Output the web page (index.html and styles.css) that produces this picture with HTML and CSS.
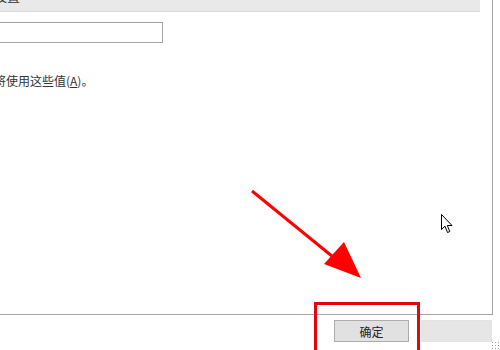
FILE: index.html
```html
<!DOCTYPE html>
<html lang="zh-CN">
<head>
  <meta charset="UTF-8" />
  <title>设置</title>
  <link rel="stylesheet" href="styles.css">
</head>
<body>
  <div class="screen">
    <div class="panel">
      <div class="header"><span class="header-title">设置</span></div>
      <div class="field"><div class="input"></div></div>
      <p class="note">将使用这些值(<u>A</u>)。</p>
    </div>
    <div class="footer">
      <button class="btn">确定</button>
      <div class="btn btn-blank"></div>
    </div>

    <!-- annotation overlays -->
    <svg class="arrow" width="120" height="100" viewBox="0 0 120 100">
      <line x1="2" y1="10" x2="88" y2="80" stroke="#f00" stroke-width="3" />
      <polygon points="111,97 74,83 94,61" fill="#f00" />
    </svg>
    <div class="mark"></div>
    <svg class="cursor" width="13" height="20" viewBox="0 0 13 20">
      <path d="M0.5 0.5 L0.5 15.5 L4 12.2 L6.5 18.5 L8.8 17.5 L6.3 11.5 L11 11.5 Z" fill="#fff" stroke="#000" stroke-width="1" stroke-linejoin="miter" />
    </svg>
    <div class="grip"></div>
  </div>
</body>
</html>
```

FILE: styles.css
```css
* {
  margin: 0;
  padding: 0;
  box-sizing: border-box;
}

body {
  width: 500px;
  height: 350px;
  overflow: hidden;
  background: #fff;
  font-family: "Noto Sans CJK SC", "Liberation Sans", sans-serif;
  color: #222;
}

.screen {
  position: relative;
  width: 500px;
  height: 350px;
  overflow: hidden;
}

.panel {
  width: 493px;
  height: 315px;
  border-right: 1px solid #a3a3a3;
  border-bottom: 1px solid #a3a3a3;
  overflow: hidden;
}

.header {
  width: 480px;
  height: 12px;
  background: #e9e9e9;
  border-bottom: 1px solid #dadada;
  overflow: hidden;
}

.header-title {
  display: block;
  margin-top: -12px;
  margin-left: -6px;
  font-size: 13px;
  line-height: 16px;
  color: #333;
}

.field {
  padding-top: 10px;
}

.input {
  width: 164px;
  height: 21px;
  margin-left: -1px;
  border: 1px solid #a3a3a3;
  background: #fff;
}

.note {
  margin-top: 29px;
  margin-left: -6px;
  font-size: 12px;
  line-height: 18px;
  color: #333;
}

.note u {
  text-decoration: underline;
  text-underline-offset: 1px;
}

.footer {
  display: flex;
  gap: 12px;
  padding: 5px 0 0 334px;
}

.btn {
  width: 75px;
  height: 22px;
  border: 1px solid #adadad;
  background: #e1e1e1;
  font-family: "Noto Sans CJK SC", sans-serif;
  font-size: 12px;
  color: #222;
}

.btn-blank {
  width: 71px;
  border-color: #e3e3e3;
  background: #e6e6e6;
}

.arrow {
  position: absolute;
  left: 250px;
  top: 181px;
}

.mark {
  position: absolute;
  left: 314px;
  top: 302px;
  width: 106px;
  height: 52px;
  border: 3px solid #e4050f;
}

.cursor {
  position: absolute;
  left: 441px;
  top: 214px;
}

.grip {
  position: absolute;
  right: 1px;
  bottom: 1px;
  width: 8px;
  height: 8px;
  background: radial-gradient(circle, #999 0.8px, transparent 1px) 0 0 / 3px 3px;
}
```
